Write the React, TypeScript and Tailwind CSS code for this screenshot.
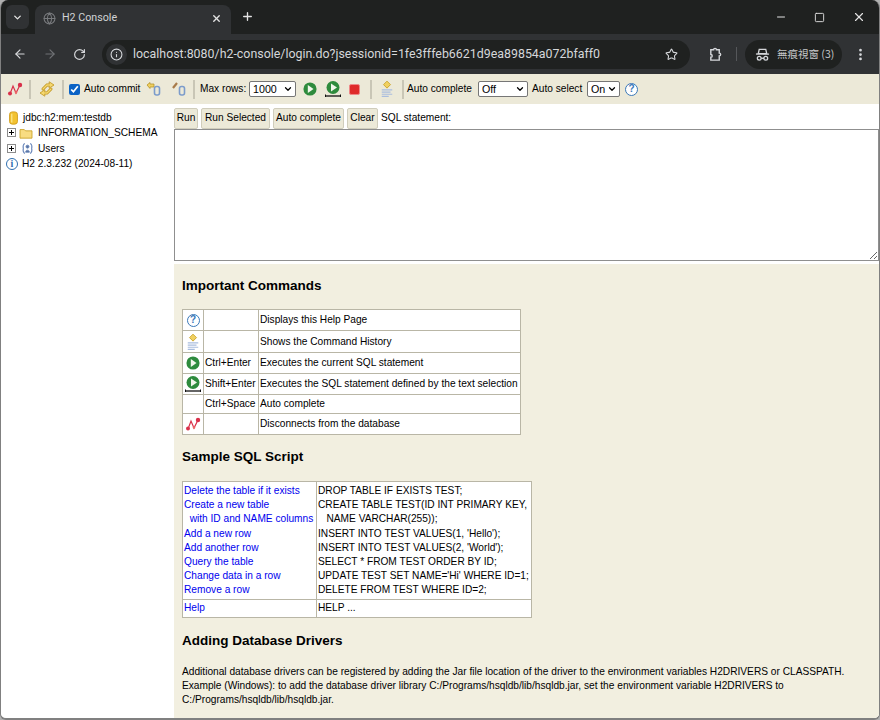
import { ArrowLeft, ArrowRight, ChevronDown, Globe, Info, Minus, MoreVertical, Plus, RotateCw, Square, Star, X } from 'lucide-react';

const Sep = ({ className }: { className: string }) => <span className={`h-[19px] w-[2px] shrink-0 bg-[#c9c6b6] ${className}`} />;

const Disconnect = ({ className = '' }: { className?: string }) => (
    <svg viewBox="0 0 16 16" className={`h-4 w-4 ${className}`} fill="none">
        <path d="M3 13 L6 5 L9 12 L13 4" stroke="#d9304a" strokeWidth="1.2" />
        <circle cx="3" cy="12.5" r="2" fill="#d9304a" />
        <circle cx="13" cy="4" r="2.2" fill="#d9304a" />
        <circle cx="9" cy="11.5" r="1.2" fill="#e66" />
    </svg>
);

const Refresh = () => (
    <svg viewBox="0 0 16 16" className="h-4 w-4" fill="none" strokeLinecap="round">
        <path d="M4 8 L8 4 H11" stroke="#c0941c" strokeWidth="3" />
        <path d="M12 8 L8 12 H5" stroke="#c0941c" strokeWidth="3" />
        <path d="M10.5 1 L15 4 L10.5 7 Z" fill="#f5d870" stroke="#c0941c" strokeWidth="0.8" />
        <path d="M5.5 9 L1 12 L5.5 15 Z" fill="#f5d870" stroke="#c0941c" strokeWidth="0.8" />
        <path d="M4 8 L8 4 H11" stroke="#f5d870" strokeWidth="1.4" />
        <path d="M12 8 L8 12 H5" stroke="#f5d870" strokeWidth="1.4" />
    </svg>
);

const Run = () => (
    <svg viewBox="0 0 16 16" className="h-[14px] w-[14px]">
        <circle cx="8" cy="8" r="7.5" fill="#2e8b3d" />
        <path d="M5.5 3.5 L12 8 L5.5 12.5 Z" fill="#f2f7ec" />
    </svg>
);

const RunSelected = () => (
    <svg viewBox="0 0 18 18" className="h-[18px] w-[18px]">
        <circle cx="9" cy="7.5" r="6.5" fill="#2e8b3d" />
        <path d="M7 3.5 L13 7.5 L7 11.5 Z" fill="#f2f7ec" />
        <path d="M1.5 16 H16.5" stroke="#111" strokeWidth="1.3" />
        <path d="M1.5 14.5 V17 M16.5 14.5 V17" stroke="#111" strokeWidth="1" />
    </svg>
);

const Stop = () => <span className="block h-[11px] w-[11px] rounded-[2px] border border-[#e88] bg-[#df2a2a]" />;

const History = () => (
    <svg viewBox="0 0 16 20" className="h-[18px] w-[14px]">
        <path d="M8 1 L12 5 L8 9 L4 5 Z" fill="#f0d060" stroke="#c9a227" />
        <path d="M2 11 H14 M2 13.5 H12 M2 16 H14 M2 18.5 H10" stroke="#a9bdde" strokeWidth="1.3" />
    </svg>
);

const Help = () => (
    <span className="flex h-[13px] w-[13px] items-center justify-center rounded-full border-[1.5px] border-[#3a78b8] bg-white font-['Liberation_Sans'] text-[10px] font-bold leading-none text-[#3a78b8]">
        ?
    </span>
);

const CommitIcon = ({ rollback }: { rollback?: boolean }) => (
    <svg viewBox="0 0 16 16" className="h-4 w-4">
        {rollback ? (
            <path d="M2 7 L6 2" stroke="#a87a4a" strokeWidth="2.2" />
        ) : (
            <path d="M1 4 L4 1.5 V3 H8 V6 H4 V7.5 Z" fill="#f0d060" stroke="#b08d20" strokeWidth="0.7" />
        )}
        <rect x="8.5" y="5.5" width="5" height="8.5" rx="2" fill="none" stroke="#7c9ccb" strokeWidth="1.6" />
    </svg>
);

const Database = () => (
    <svg viewBox="0 0 12 16" className="h-[14px] w-[11px]">
        <rect x="1.5" y="1" width="9" height="14" rx="3" fill="#f2c230" stroke="#cf9a18" />
        <path d="M4 3 V13" stroke="#fbe58a" strokeWidth="1.5" />
    </svg>
);

const Folder = () => (
    <svg viewBox="0 0 16 14" className="h-[12px] w-[14px]">
        <path d="M1 3 H6 L7.5 4.5 H15 V13 H1 Z" fill="#f8dc82" stroke="#c9a227" />
    </svg>
);

const Users = () => (
    <svg viewBox="0 0 14 14" className="h-[13px] w-[13px]" fill="none" stroke="#6b88bb">
        <path d="M4 1.5 C2 3 2 5 2.5 7 C2 9 2 11 4 12.5 M10 1.5 C12 3 12 5 11.5 7 C12 9 12 11 10 12.5" strokeWidth="1.2" />
        <circle cx="7" cy="5" r="1.6" fill="#55709f" />
        <path d="M5 11 C5 8 9 8 9 11 Z" fill="#55709f" />
    </svg>
);

const Expander = () => (
    <span className="relative h-[9px] w-[9px] shrink-0 border border-[#8c8c8c] bg-white">
        <span className="absolute left-[1px] top-[3px] h-px w-[5px] bg-black" />
        <span className="absolute left-[3px] top-[1px] h-[5px] w-px bg-black" />
    </span>
);

const Incognito = () => (
    <svg viewBox="0 0 16 16" className="h-[15px] w-[15px]" fill="none" stroke="#d5d7da" strokeWidth="1.4">
        <path d="M4.5 2.5 H11.5 L12.5 7 H3.5 Z" />
        <path d="M1 7.5 H15" />
        <circle cx="4.5" cy="12" r="2" />
        <circle cx="11.5" cy="12" r="2" />
        <path d="M6.5 12 H9.5" />
    </svg>
);

const Select = ({ value, options, className }: { value: string; options: string[]; className: string }) => (
    <div className="relative flex items-center">
        <select defaultValue={value} className={`h-[16px] appearance-none rounded-[2px] border border-[#767676] bg-white pl-[3px] text-[10.7px] leading-none text-black ${className}`}>
            {options.map((o) => (
                <option key={o}>{o}</option>
            ))}
        </select>
        <ChevronDown className="pointer-events-none absolute right-[3px] top-[3px] h-[10px] w-[10px] text-black" strokeWidth={3} />
    </div>
);

const commands = [
    { icon: <Help />, keys: '', text: 'Displays this Help Page', h: 'h-[21px]' },
    { icon: <History />, keys: '', text: 'Shows the Command History', h: 'h-[22px]' },
    { icon: <Run />, keys: 'Ctrl+Enter', text: 'Executes the current SQL statement', h: 'h-[21px]' },
    { icon: <RunSelected />, keys: 'Shift+Enter', text: 'Executes the SQL statement defined by the text selection', h: 'h-[21px]' },
    { icon: null, keys: 'Ctrl+Space', text: 'Auto complete', h: 'h-[19px]' },
    { icon: <Disconnect />, keys: '', text: 'Disconnects from the database', h: 'h-[21px]' },
];

const samples = [
    ['Delete the table if it exists', 'DROP TABLE IF EXISTS TEST;'],
    ['Create a new table', 'CREATE TABLE TEST(ID INT PRIMARY KEY,'],
    ['\u00a0\u00a0with ID and NAME columns', '\u00a0\u00a0\u00a0NAME VARCHAR(255));'],
    ['Add a new row', "INSERT INTO TEST VALUES(1, 'Hello');"],
    ['Add another row', "INSERT INTO TEST VALUES(2, 'World');"],
    ['Query the table', 'SELECT * FROM TEST ORDER BY ID;'],
    ['Change data in a row', "UPDATE TEST SET NAME='Hi' WHERE ID=1;"],
    ['Remove a row', 'DELETE FROM TEST WHERE ID=2;'],
];

const buttonClass = 'h-[21px] shrink-0 rounded-[2px] border border-[#d0cdbc] bg-[#ece9d8] text-center text-[10.17px] leading-none text-black';

export default function App() {
    return (
        <div className="h-[720px] w-[880px] overflow-hidden bg-[#b0b0b0] font-['Liberation_Sans',sans-serif] text-[10.17px] text-black">
            <div className="flex h-full w-full flex-col overflow-hidden rounded-t-[8px] rounded-b-[6px] border-x border-b-2 border-[#808080]">
                {/* tab strip */}
                <div className="flex h-[34px] shrink-0 items-end bg-[#1f2120] pl-[5px]">
                    <div className="mb-[5px] flex h-[24px] w-[23px] items-center justify-center rounded-[6px] bg-[#303234]">
                        <ChevronDown className="h-[11px] w-[11px] text-[#e3e3e3]" strokeWidth={3} />
                    </div>
                    <div className="ml-[6px] flex h-[29px] w-[196px] items-center rounded-t-[8px] bg-[#303234] pb-[3px] pl-[8px] pr-[9px]">
                        <Globe className="h-[13px] w-[13px] text-[#77797c]" />
                        <span className="ml-[6px] flex-1 font-['Roboto'] text-[10.7px] text-[#d0d2d5]">H2 Console</span>
                        <X className="h-[11px] w-[11px] text-[#e3e3e3]" strokeWidth={3} />
                    </div>
                    <div className="mb-[11px] ml-[10px] flex items-center">
                        <Plus className="h-[13px] w-[13px] text-[#e3e3e3]" strokeWidth={2.5} />
                    </div>
                    <div className="mb-[10px] ml-auto flex items-center gap-[27px] pr-[13px] text-[#e3e3e3]">
                        <Minus className="h-[12px] w-[12px]" />
                        <Square className="h-[11px] w-[11px]" strokeWidth={2} />
                        <X className="h-[14px] w-[14px]" />
                    </div>
                </div>
                {/* address bar */}
                <div className="flex h-[40px] shrink-0 items-center bg-[#303234] pl-[12px] pr-[11px]">
                    <ArrowLeft className="h-[14px] w-[14px] text-[#d5d7da]" strokeWidth={2} />
                    <ArrowRight className="ml-[16px] h-[14px] w-[14px] text-[#6f7174]" strokeWidth={2} />
                    <RotateCw className="ml-[16px] h-[13px] w-[13px] text-[#d5d7da]" strokeWidth={2.2} />
                    <div className="ml-[16px] flex h-[29px] w-[588px] items-center rounded-full bg-[#1f2120] pl-[4px] pr-[12px]">
                        <span className="flex h-[21px] w-[21px] items-center justify-center rounded-full bg-[#303234]">
                            <Info className="h-[13px] w-[13px] text-[#d5d7da]" />
                        </span>
                        <span className="ml-[6px] flex-1 whitespace-nowrap font-['Roboto'] text-[12.4px] text-[#d5d7da]">
                            localhost:8080/h2-console/login.do?jsessionid=1fe3fffeb6621d9ea89854a072bfaff0
                        </span>
                        <Star className="h-[13px] w-[13px] text-[#d5d7da]" strokeWidth={2} />
                    </div>
                    <svg viewBox="0 0 16 16" className="ml-[18px] h-[15px] w-[15px]" fill="none" stroke="#d5d7da" strokeWidth="1.5">
                        <path d="M3 3 H6 C6 1 9 1 9 3 H12 V6.5 C14 6.5 14 9.5 12 9.5 V14 H3 V11 C5 11 5 8 3 8 Z" />
                    </svg>
                    <span className="ml-[13px] h-[14px] w-px bg-[#55575a]" />
                    <div className="ml-[8px] flex h-[29px] w-[97px] items-center rounded-full bg-[#1f2120] pl-[10px]">
                        <Incognito />
                        <span className="ml-[7px] whitespace-nowrap font-['Noto_Sans_CJK_TC',sans-serif] text-[10.5px] text-[#c4c7c9]">無痕視窗 (3)</span>
                    </div>
                    <MoreVertical className="ml-auto h-[15px] w-[15px] text-[#d5d7da]" strokeWidth={2.4} />
                </div>
                {/* toolbar */}
                <div className="flex h-[30px] shrink-0 items-center bg-[#ece9d8] pl-[6px]">
                    <Disconnect />
                    <Sep className="ml-[6px]" />
                    <span className="ml-[8px]"><Refresh /></span>
                    <Sep className="ml-[7px]" />
                    <input type="checkbox" defaultChecked className="ml-[5px] h-[11px] w-[11px] accent-[#0b63c5]" />
                    <span className="ml-[4px] w-[56px] whitespace-nowrap">Auto commit</span>
                    <span className="ml-[6px]"><CommitIcon /></span>
                    <span className="ml-[9px]"><CommitIcon rollback /></span>
                    <Sep className="ml-[6px]" />
                    <span className="ml-[5px] w-[46px] whitespace-nowrap">Max rows:</span>
                    <span className="ml-[3px]"><Select value="1000" options={['1000']} className="w-[47px]" /></span>
                    <span className="ml-[7px]"><Run /></span>
                    <span className="ml-[7px]"><RunSelected /></span>
                    <span className="ml-[7px]"><Stop /></span>
                    <Sep className="ml-[10px]" />
                    <span className="ml-[8px]"><History /></span>
                    <Sep className="ml-[8px]" />
                    <span className="ml-[3px] w-[64px] whitespace-nowrap">Auto complete</span>
                    <span className="ml-[7px]"><Select value="Off" options={['Off']} className="w-[50px]" /></span>
                    <span className="ml-[4px] w-[50px] whitespace-nowrap">Auto select</span>
                    <span className="ml-[5px]"><Select value="On" options={['On']} className="w-[33px]" /></span>
                    <span className="ml-[5px]"><Help /></span>
                </div>
                {/* main */}
                <div className="flex min-h-0 flex-1">
                    <div className="w-[173px] shrink-0 bg-white pl-[4px] pt-[6px]">
                        <div className="flex h-[15.3px] items-center gap-[4px] pl-[3px]"><Database /><span>jdbc:h2:mem:testdb</span></div>
                        <div className="flex h-[15.3px] items-center pl-[2px]">
                            <Expander />
                            <span className="ml-[3px]"><Folder /></span>
                            <span className="ml-[5px] whitespace-nowrap">INFORMATION_SCHEMA</span>
                        </div>
                        <div className="flex h-[15.3px] items-center pl-[2px]">
                            <Expander />
                            <span className="ml-[5px]"><Users /></span>
                            <span className="ml-[4px]">Users</span>
                        </div>
                        <div className="flex h-[15.3px] items-center gap-[4px] pl-px">
                            <span className="flex h-[12px] w-[12px] items-center justify-center rounded-full border border-[#2f6fb0] font-['Liberation_Serif'] text-[10px] font-bold leading-none text-[#2f6fb0]">i</span>
                            <span>H2 2.3.232 (2024-08-11)</span>
                        </div>
                    </div>
                    <div className="flex min-w-0 flex-1 flex-col bg-white">
                        <div className="flex h-[25px] items-center gap-[3px] pt-[3px]">
                            <button className={`${buttonClass} w-[24px]`}>Run</button>
                            <button className={`${buttonClass} w-[69px]`}>Run Selected</button>
                            <button className={`${buttonClass} w-[71px]`}>Auto complete</button>
                            <button className={`${buttonClass} w-[31px]`}>Clear</button>
                            <span>SQL statement:</span>
                        </div>
                        <textarea className="block h-[132px] w-full shrink-0 resize-y border border-[#8f8f8f] bg-white" />
                        <div className="mt-[3px] min-h-0 flex-1 bg-[#f2efe0] pl-2 pr-2">
                            <h3 className="mt-[13px] text-[13.5px] font-bold leading-[18px]">Important Commands</h3>
                            <table className="mt-[14px] w-[339px] table-fixed border-collapse border border-[#b9b6a6] bg-white">
                                <tbody>
                                    {commands.map((c) => (
                                        <tr key={c.text} className={c.h}>
                                            <td className="w-[21px] border border-[#b9b6a6] p-0"><span className="flex items-center justify-center">{c.icon}</span></td>
                                            <td className="w-[55px] whitespace-nowrap border border-[#b9b6a6] pl-px pr-0 py-0">{c.keys}</td>
                                            <td className="whitespace-nowrap border border-[#b9b6a6] pl-px pr-0 py-0">{c.text}</td>
                                        </tr>
                                    ))}
                                </tbody>
                            </table>
                            <h3 className="mt-[13px] text-[13.5px] font-bold leading-[18px]">Sample SQL Script</h3>
                            <table className="mt-[15px] w-[350px] table-fixed border-collapse border border-[#b9b6a6] bg-white">
                                <tbody>
                                    <tr>
                                        <td className="w-[134px] border border-[#b9b6a6] pb-px pl-px pr-0 pt-[2px] align-top">
                                            {samples.map((s) => (
                                                <div key={s[0]} className="h-[14.2px] whitespace-nowrap leading-[14.2px] text-[#0000ee]">{s[0]}</div>
                                            ))}
                                        </td>
                                        <td className="border border-[#b9b6a6] pb-px pl-px pr-0 pt-[2px] align-top">
                                            {samples.map((s) => (
                                                <div key={s[1]} className="h-[14.2px] whitespace-nowrap leading-[14.2px]">{s[1]}</div>
                                            ))}
                                        </td>
                                    </tr>
                                    <tr className="h-[18px]">
                                        <td className="border border-[#b9b6a6] pl-px pr-0 py-0 text-[#0000ee]">Help</td>
                                        <td className="border border-[#b9b6a6] pl-px pr-0 py-0">HELP ...</td>
                                    </tr>
                                </tbody>
                            </table>
                            <h3 className="mt-[14px] text-[13.5px] font-bold leading-[18px]">Adding Database Drivers</h3>
                            <p className="mt-[15px] leading-[14.3px]">
                                Additional database drivers can be registered by adding the Jar file location of the driver to the environment variables H2DRIVERS or CLASSPATH.
                                <br />
                                Example (Windows): to add the database driver library C:/Programs/hsqldb/lib/hsqldb.jar, set the environment variable H2DRIVERS to
                                <br />
                                C:/Programs/hsqldb/lib/hsqldb.jar.
                            </p>
                        </div>
                    </div>
                </div>
            </div>
        </div>
    );
}
